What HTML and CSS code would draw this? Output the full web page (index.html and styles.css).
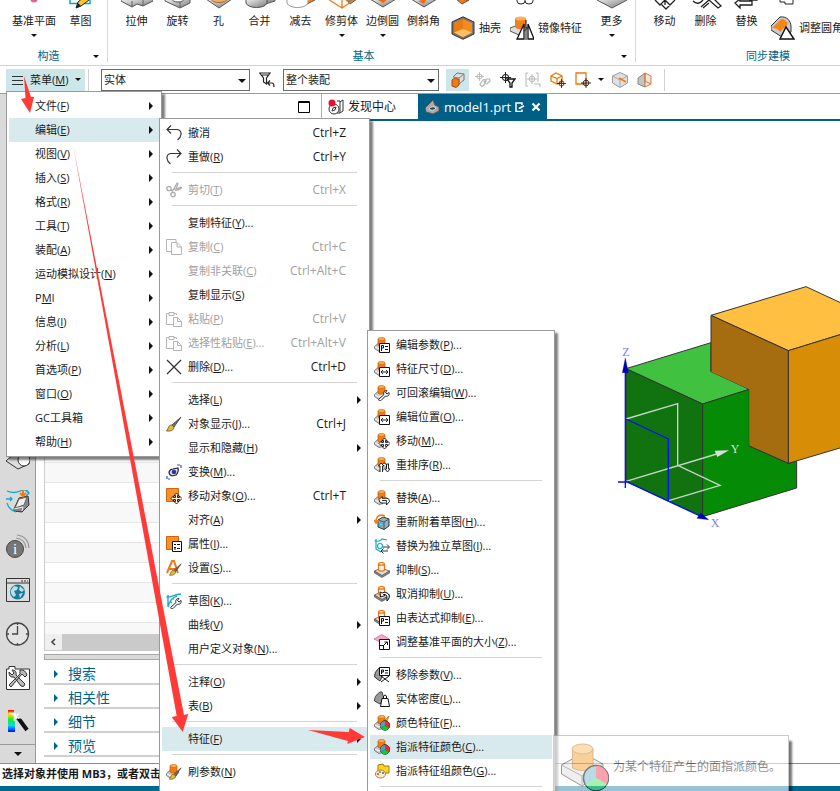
FILE: index.html
```html
<!DOCTYPE html>
<html lang="zh-CN">
<head>
<meta charset="utf-8">
<title>model1.prt</title>
<link rel="stylesheet" href="styles.css">
</head>
<body>
<svg class="defs" aria-hidden="true">
  <defs>
    <linearGradient id="metal" x1="0" y1="0" x2="1" y2="1"><stop offset="0" stop-color="#f4f4f4"/><stop offset="1" stop-color="#777"/></linearGradient>
    <linearGradient id="spectrum" x1="0" y1="0" x2="0" y2="1"><stop offset="0" stop-color="#f00"/><stop offset=".2" stop-color="#fd0"/><stop offset=".45" stop-color="#1e2"/><stop offset=".7" stop-color="#0de"/><stop offset="1" stop-color="#10f"/></linearGradient>
  </defs>
  <symbol id="feat" viewBox="0 0 16 16"><path d="M0.500 9.500L4 6.500L13 8L9 13.500L5 14.500L.5 11.500Z" fill="#c9c9c9" stroke="#666" stroke-width=".8"/><path d="M1 10L5 12L10 9" fill="none" stroke="#fff"/><path d="M4 2V8C5 9.500 10 9.500 11 8V2" fill="#f07d12" stroke="#b75a08" stroke-width=".7"/><ellipse cx="7.500" cy="2" rx="3.500" ry="1.500" fill="#ffad55" stroke="#c9680c" stroke-width=".7"/></symbol>
  <symbol id="supp" viewBox="0 0 16 16"><path d="M.5 9L7 6L15.500 9L8 14Z" fill="#ddd" stroke="#777"/><path d="M.5 9V11L8 15.500L15.500 11V9L8 13.500Z" fill="#888" stroke="#555" stroke-width=".7"/><path d="M4.500 2V8C5 9.500 10 9.500 10.500 8V2C10 0 5 0 4.500 2C5 3.500 10 3.500 10.500 2" fill="#fff3e6" stroke="#e87511" stroke-width="1.200"/></symbol>
  <symbol id="b-param" viewBox="0 0 16 16"><path d="M5.500 6.500H15.500V15.500H5.500Z" fill="#fff" stroke="#111"/><path d="M7.500 14V8.500H9.500V11H7.500M11 9.500H14M11 12.500H14" fill="none" stroke="#111"/></symbol>
  <symbol id="b-dim" viewBox="0 0 16 16"><path d="M5.500 6.500H15.500V15.500H5.500Z" fill="#fff" stroke="#111"/><path d="M7 11H14M9 9L7 11L9 13M12 9L14 11L12 13" fill="none" stroke="#111" stroke-width=".9"/></symbol>
  <symbol id="b-move" viewBox="0 0 16 16"><path d="M10.500 5L13 7.500H11.500V9.500H13.500V8L16 10.500L13.500 13V11.500H11.500V13.500H13L10.500 16L8 13.500H9.500V11.500H7.500V13L5 10.500L7.500 8V9.500H9.500V7.500H8Z" fill="#fff" stroke="#111" stroke-width=".9"/></symbol>
  <symbol id="b-wrench" viewBox="0 0 16 16"><path d="M5 14L10 9.500C9 7 11 5 13 5.500L11.500 7.500L13 9L15 7.500C16 10 13.500 12 11.500 11L7 15.500C5.500 16.500 4 15 5 14Z" fill="#fff" stroke="#111" stroke-width=".9"/></symbol>
  <symbol id="b-swap" viewBox="0 0 16 16"><path d="M5 9.500L8 6.500V8.300H13Q15.500 8.500 15.500 11.500L12.500 15V13H8Q5 13 5 9.500ZM8 10.500H12.500V12.500" fill="#fff" stroke="#111" stroke-width=".9"/></symbol>
  <symbol id="b-cycle" viewBox="0 0 16 16"><path d="M6 15V9H4.500L7 6L10 9H8.500V15M15 7H12.500V12H11L13.500 15L16 12H14.500V7M8.500 7C11 5 13 7 12.500 10" fill="#fff" stroke="#111" stroke-width=".9"/></symbol>
  <symbol id="b-pie" viewBox="0 0 16 16"><circle cx="11" cy="10.500" r="4.700" fill="#223" stroke="#222"/><path d="M11 10.500V6A4.500 4.500 0 0 1 15 13Z" fill="#f23"/><path d="M11 10.500L15 13A4.500 4.500 0 0 1 7 13Z" fill="#1c3"/><path d="M11 10.500L7 13A4.500 4.500 0 0 1 11 6Z" fill="#5a9db8"/></symbol>
  <symbol id="paste" viewBox="0 0 16 16"><path d="M7 13.500H.5V2.500H3V1.500H8V2.500H10.500V4M3 2V4.500H8V2M7.500 6.500H11.500L15.500 10.500V15.500H7.500ZM11.500 6.500V10.500H15.500" fill="none" stroke="#b4b4b4"/></symbol>
  <symbol id="brush" viewBox="0 0 16 16"><path d="M15 1L6 9L8 11Z" fill="#777" stroke="#222" stroke-width=".7"/><path d="M6 9C2 9 3 12 .5 15C5 15.500 8 14 8 11Z" fill="#e2ba45" stroke="#6b520d" stroke-width=".8"/></symbol>
  <symbol id="sketch" viewBox="0 0 16 16"><path d="M.5 4C5 5 8 1 15 1M2 2V14C3 9 6 5 11 3M6 10C3 9 5 5 8 6" fill="none" stroke="#12a7c5" stroke-width="1.300"/></symbol>
  <symbol id="target" viewBox="0 0 16 16"><circle cx="8" cy="8" r="4.500" fill="none" stroke="currentColor" stroke-width="1.500"/><path d="M8 0V16M0 8H16" stroke="currentColor" stroke-width="1.500"/></symbol>
</svg>

<div class="app">
  <header class="ribbon">
    <section class="group group-make">
      <div class="tools">
        <button class="tool wide"><svg viewBox="0 0 32 12"><circle cx="16" cy="-1" r="3.500" fill="#e4608d"/></svg>基准平面<i class="down"></i></button>
        <button class="tool"><svg viewBox="0 0 32 12"><path d="M5 0V3.500H25V0" fill="none" stroke="#0aa5c8" stroke-width="1.500"/><path d="M11 8L13 2L20 -4L24 0L16 6Z" fill="#ffc629" stroke="#222"/><path d="M11 8L13 3L16 6Z" fill="#222"/></svg>草图</button>
      </div>
      <h2>构造<i class="down corner"></i></h2>
    </section>
    <section class="group group-basic">
      <div class="tools">
        <button class="tool"><svg viewBox="0 0 32 12"><path d="M0 -1V1L11 7L16 4L22 6L32 1V-1Z" fill="url(#metal)" stroke="#555"/><path d="M11 7V1M22 6V0" stroke="#666"/></svg>拉伸</button>
        <button class="tool"><svg viewBox="0 0 32 12"><path d="M3 -1V1L18 8L28 3V-1Z" fill="url(#metal)" stroke="#555"/><path d="M18 8V2" stroke="#666"/><ellipse cx="16" cy="-1" rx="6" ry="3" fill="#fff" stroke="#555"/></svg>旋转</button>
        <button class="tool"><svg viewBox="0 0 32 12"><path d="M3 -1L16 8L29 -1Z" fill="url(#metal)" stroke="#555"/><ellipse cx="16" cy="-1" rx="8" ry="3.500" fill="#f1ad69" stroke="#a96b35"/></svg>孔</button>
        <button class="tool"><svg viewBox="0 0 32 12"><path d="M18 -1V5L31 1V-1" fill="#999" stroke="#555"/><path d="M2 -1V3C4 9 21 9 23 3V-1" fill="url(#metal)" stroke="#555"/></svg>合并</button>
        <button class="tool"><svg viewBox="0 0 32 12"><path d="M20 -1V5L30 0" fill="#f5831f" stroke="#555"/><path d="M2 -1V3C4 9 21 9 23 3V-1" fill="#fff" stroke="#999"/></svg>减去</button>
        <button class="tool"><svg viewBox="0 0 32 12"><path d="M20 -1H31L24 4Z" fill="#888" stroke="#555"/><path d="M2 -1L16 8L28 0M16 -1V8M4 0L11 -3M20 1L25 -3" fill="none" stroke="#ee7b18" stroke-width="1.300"/></svg>修剪体<i class="down"></i></button>
        <button class="tool"><svg viewBox="0 0 32 12"><path d="M3 -1L16 7L29 -1Z" fill="url(#metal)" stroke="#555"/><path d="M11 0L16 3L21 -1Z" fill="#f36c10"/></svg>边倒圆<i class="down"></i></button>
        <button class="tool"><svg viewBox="0 0 32 12"><path d="M3 -1L16 7L29 -1Z" fill="url(#metal)" stroke="#555"/><path d="M10 1L16 4L19 -1Z" fill="#f36c10"/></svg>倒斜角</button>
        <div class="stack">
          <span class="upper"><svg viewBox="0 0 24 5"><path d="M5 -1L11 4L18 0Z" fill="#f27b16" stroke="#555"/></svg></span>
          <button class="line"><svg viewBox="0 0 24 24"><path d="M12 .8L23 6V18L12 23.300L1 18V6Z" fill="#777" stroke="#333"/><path d="M12 3L21 7V16.500L12 21L3 16.500V7Z" fill="#f58b1d"/><path d="M12 3V13L3 17V7Z" fill="#e97c10"/><path d="M12 13L21 16.500L12 21L3 16.500Z" fill="#ffc061"/></svg>抽壳</button>
        </div>
        <div class="stack">
          <span class="upper"><svg viewBox="0 0 24 5"><path d="M7 -2V1Q7 4 11 4Q15 4 15 1V-2M15 1Q15 4 19 4Q23 4 23 1V-2" fill="none" stroke="#222"/></svg></span>
          <button class="line"><svg viewBox="0 0 24 24"><path d="M0 12L8 9L18 12L9 19L0 15Z" fill="#ddd" stroke="#555"/><path d="M5 2V11C7 14 14 14 16 11V2Z" fill="#f27f17"/><ellipse cx="10.500" cy="2.500" rx="5.500" ry="2" fill="#ffae5b"/><path d="M14 8V23H7ZM18 8V23H24Z" fill="#fff" stroke="#111" stroke-width="1.300"/><path d="M16 4V24" stroke="#111"/></svg>镜像特征</button>
        </div>
        <button class="tool more"><svg viewBox="0 0 32 12"><path d="M1 0L16 8L31 0V-2H1Z" fill="url(#metal)" stroke="#555"/></svg>更多<i class="down"></i></button>
      </div>
      <h2>基本<i class="down corner"></i></h2>
    </section>
    <section class="group group-sync">
      <div class="tools">
        <button class="tool"><svg viewBox="0 0 32 12"><path d="M6 0L11 5L16 0L21 5L26 0M12 4L17 9L22 4M16 0V5" fill="#fff" stroke="#222" stroke-width="1.300"/></svg>移动</button>
        <button class="tool"><svg viewBox="0 0 32 12"><path d="M3 1Q8 6 13 0M11 7L19 0L28 8L31 6L24 -1M13 8L19 3" fill="none" stroke="#222" stroke-width="1.300"/></svg>删除</button>
        <button class="tool"><svg viewBox="0 0 32 12"><path d="M4 3L9 -1V1H21V5H9V8ZM18 0H26V-3" fill="#fff" stroke="#222" stroke-width="1.300"/></svg>替换</button>
        <div class="stack">
          <span class="upper"><svg viewBox="0 0 24 5"><path d="M9 -2V2H14V4H22V-2" fill="none" stroke="#222"/></svg></span>
          <button class="line"><svg viewBox="0 0 24 24"><path d="M0 10L9 1C16 0 20 5 20 11V16L11 21L0 14Z" fill="#ccc" stroke="#333"/><path d="M1 12L10 3Q15 3 17 8L9 16Q7 12 1 12Z" fill="#f58719"/><path d="M15 11L23 23H9Z" fill="#fff" stroke="#111" stroke-width="1.400"/></svg>调整圆角</button>
        </div>
      </div>
      <h2>同步建模</h2>
    </section>
  </header>

  <div class="toolbar" role="toolbar">
    <button class="menu-button"><svg viewBox="0 0 12 12"><path d="M0 2.500H11M0 6.500H11M0 10.500H11" stroke="#333"/></svg>菜单(<u>M</u>)<i class="down"></i></button>
    <label class="combo combo-a"><select aria-label="类型过滤器"><option>实体</option></select></label>
    <button class="icon" aria-label="重置过滤器"><svg viewBox="0 0 16 16"><path d="M.7 1H11L7.500 6V12L4.500 10V6ZM3 3H9" fill="none" stroke="#222" stroke-width="1.200"/><path d="M9 11H13Q15 11 15 15M11 8.500L8.500 11L11 13.500" fill="none" stroke="#222" stroke-width="1.200"/></svg></button>
    <label class="combo combo-b"><select aria-label="选择范围"><option>整个装配</option></select></label>
    <div class="icons">
      <button class="icon on" aria-label="选择实体"><svg viewBox="0 0 16 16"><path d="M3 5L7 1L14 2V8L9 12" fill="#ddd" stroke="#777"/><path d="M3 5L9 6L14 2M9 6V10" fill="none" stroke="#888"/><path d="M2 8L5 6L9 7.500V13L6 15.500L2 14Z" fill="#f27a12" stroke="#a94d08"/></svg></button>
      <button class="icon dim" aria-label="链接"><svg viewBox="0 0 16 16"><use href="#target" width="9" height="9"/><path d="M5 12L8 8Q10 7 11 9L9 13Q6 16 5 12ZM9 10L12 7Q15 6 15 9L12 12Q10 12 9 10Z" fill="none" stroke="currentColor" stroke-width="1.200"/></svg></button>
      <button class="icon" aria-label="捕捉过滤"><svg viewBox="0 0 16 16"><use href="#target" width="11" height="11"/><path d="M7 7H15L12 11V15H10V11Z" fill="#fff" stroke="#111" stroke-width="1.300"/></svg></button>
      <button class="icon dim" aria-label="区域"><svg viewBox="0 0 16 16"><path d="M3 1H1V14H3M11 1H13V10M9 12H15V15" fill="none" stroke="currentColor"/><use href="#target" x="2" y="2" width="10" height="10"/></svg></button>
      <button class="icon" aria-label="立方体选择"><svg viewBox="0 0 16 16"><path d="M1 4L6 1L12 4V10L7 12L1 9ZM1 4L7 6.500L12 4M7 6.500V12" fill="none" stroke="#e97a12" stroke-width="1.300"/><use href="#target" x="7" y="7" width="9" height="9"/></svg></button>
      <button class="icon" aria-label="矩形选择"><svg viewBox="0 0 16 16"><path d="M1 1H11V12H1Z" fill="none" stroke="#e97a12" stroke-width="1.300"/><use href="#target" x="6" y="6" width="10" height="10"/></svg></button>
      <i class="down"></i>
      <button class="icon" aria-label="截面"><svg viewBox="0 0 16 16"><path d="M.5 4L8 .5L15.500 4V11L8 15.500L.5 11Z" fill="#e0e0e0" stroke="#999"/><path d="M.5 4L8 8L15.500 4M8 8V15" fill="none" stroke="#aaa"/><path d="M7 6L14 10" stroke="#f27a12" stroke-width="1.800"/></svg></button>
      <button class="icon" aria-label="着色"><svg viewBox="0 0 16 16"><path d="M1 6L8 1V15L1 12Z" fill="#c4c4c4" stroke="#888"/><path d="M8 1L14 4V12L8 15Z" fill="#e6e6e6" stroke="#e8762d"/><path d="M8 1V9L14 12" fill="none" stroke="#e8762d"/></svg></button>
    </div>
  </div>

  <main class="work">
    <nav class="rail">
      <button aria-label="装配"><svg viewBox="0 0 24 24"><path d="M0 15L8 8H23V18L12 23Z" fill="#ddd" stroke="#333"/><circle cx="18" cy="14" r="6" fill="#fff" stroke="#333"/></svg></button>
      <button aria-label="流分析"><svg viewBox="0 0 24 24"><path d="M8 19L13 8L22 6L23 15L16 22L8 21Z" fill="#888" stroke="#333"/><path d="M13 9L21 7L18 15L9 18Z" fill="#eee" stroke="#666"/><path d="M8 19L17 17L16 21" fill="none" stroke="#eee"/><path d="M1 1Q8 4 14 1T23 3M0 9H6M1 13Q3 20 10 22M20 1L23 3L20 6M4 7L6 9L4 11" fill="none" stroke="#18a6cf" stroke-width="1.300"/><path d="M17 0V5M14 3L17 6L20 3" fill="none" stroke="#f27a12" stroke-width="2"/></svg></button>
      <button aria-label="信息"><svg viewBox="0 0 24 24"><circle cx="9" cy="15" r="8.500" fill="#777" stroke="#444"/><text x="9" y="20" text-anchor="middle" class="info">i</text><path d="M10 4Q19 5 20 14M11 1Q22 2 23 14" fill="none" stroke="#999" stroke-width="1.200"/></svg></button>
      <button aria-label="浏览器"><svg viewBox="0 0 24 24"><path d="M.5 .5H23.500V23.500H.5Z" fill="#ddd" stroke="#333"/><path d="M.5 5H23.500M15 3H17M18 3H20M21 3H22" stroke="#333"/><circle cx="11.500" cy="14" r="7.500" fill="#187a9b"/><path d="M5 12L8 8L12 9L11 12L8 13L10 17L8 19Q4 16 5 12M14 8L18 12L16 14L13 12ZM13 16L17 15L14 20Z" fill="#bcdfe8"/></svg></button>
      <button aria-label="历史记录"><svg viewBox="0 0 24 24"><circle cx="11.500" cy="12" r="11" fill="#e4e4e4" stroke="#444" stroke-width="1.300"/><path d="M11.500 4V12H6M11.500 1V3M11.500 21V23M1 12H3M20 12H22" fill="none" stroke="#444" stroke-width="1.300"/></svg></button>
      <button aria-label="工具"><svg viewBox="0 0 24 24"><path d="M.5 3H3V.5H9V3H23.500V23.500H.5Z" fill="#fff" stroke="#333"/><path d="M3 6L6 9L8 7L6 4Q11 4 10 9L19 18Q18 22 15 20L8 11Q3 12 3 6ZM14 4Q19 3 21 9L19 11L16 8L5 21L3 19L14 8Z" fill="#bbb" stroke="#333"/></svg></button>
      <button aria-label="颜色"><svg viewBox="0 0 24 24"><path d="M2 0H9V22H2Z" fill="url(#spectrum)"/><path d="M10 5L21 20" stroke="#111" stroke-width="4"/><path d="M10 4L13 9M9 0L10 4L15 2L12 6L16 8L11 8L8 11L8 6L3 3L8 3Z" fill="#fff" stroke="#ddd"/></svg></button>
      <button class="rail-more" aria-label="更多"><i class="down big"></i></button>
    </nav>
    <section class="panel">
      <div class="panel-head"><svg viewBox="0 0 12 12"><path d="M.5 .5H11.500V11.500H.5ZM0 1.500H12" fill="none" stroke="#000"/></svg></div>
      <div class="panel-body">
        <div class="rows"></div>
        <div class="scroll"><svg viewBox="0 0 6 8"><path d="M5 1L2 4L5 7" fill="none" stroke="#444" stroke-width="1.600"/></svg></div>
        <div class="splitter"></div>
        <button class="section"><i class="right"></i>搜索</button>
        <button class="section"><i class="right"></i>相关性</button>
        <button class="section"><i class="right"></i>细节</button>
        <button class="section"><i class="right"></i>预览</button>
      </div>
    </section>
    <section class="view">
      <div class="tabs">
        <button class="tab"><svg viewBox="0 0 16 16"><circle cx="6" cy="10" r="5" fill="#fff" stroke="#333"/><path d="M4 12L5 9L8 8L7 11ZM9 2H12V14H9M12 3L15 1V12L12 14" fill="none" stroke="#333"/><circle cx="4" cy="4" r="3.500" fill="#e8112d"/></svg>发现中心</button>
        <button class="tab current"><svg viewBox="0 0 16 16"><path d="M1 9L9 1L11 6L15 8V12L9 15L2 13Z" fill="#aaa" stroke="#555"/><path d="M5 10Q8 6 12 9Q9 13 5 10Z" fill="#345" stroke="#ddd"/></svg><span>model1.prt</span><svg class="small" viewBox="0 0 10 10"><path d="M7 3V1H1V9.500H7V7.500" fill="none" stroke="#fff" stroke-width="1.500"/><path d="M3.500 7L4 5.500L8.500 3L9.500 4.500L5 7Z" fill="#fff"/></svg><svg class="small" viewBox="0 0 10 10"><path d="M1.500 1.500L8.500 8.500M8.500 1.500L1.500 8.500" stroke="#fff" stroke-width="2.200"/></svg></button>
      </div>
      <div class="scene">
        <svg viewBox="0 0 720 780">
          <g stroke="#333" stroke-width="3" stroke-linejoin="round">
            <path d="M78 266L333 188V275L448 328L308 372Z" fill="#40c140"/>
            <path d="M78 266L308 372V710L78 604Z" fill="#107310"/>
            <path d="M308 372L448 328V498L566 550L590 544V624L308 710Z" fill="#058b05"/>
            <path d="M333 106L618 20L730 72V161L565 212Z" fill="#ffbf40"/>
            <path d="M565 212L730 161V501L565 550Z" fill="#d78d05"/>
          </g>
          <path d="M333 106L565 212V550L448 498V328L333 275Z" fill="#a56d0f"/>
          <path d="M333 275V106L565 212V550L448 498" fill="none" stroke="#333" stroke-width="3"/>
          <path d="M78 417L233 371V556L360 616L206 662M78 604L350 522" fill="none" stroke="#c8d4c8" stroke-width="4"/>
          <path d="M344 512L387 511L352 531Z" fill="#ddd"/>
          <path d="M76 270V624M54 606H88M78 417L205 477V662M78 604L300 708" fill="none" stroke="#0012ee" stroke-width="4"/>
          <path d="M67 278L76 234L85 278ZM302 699L326 719L291 715Z" fill="#0000b8" stroke="#0000b8"/>
          <g class="axis"><text x="67" y="228">Z</text><text class="y" x="392" y="518">Y</text><text x="332" y="740">X</text></g>
        </svg>
      </div>
    </section>
  </main>

  <footer class="status">选择对象并使用 MB3，或者双击</footer>
</div>

<ul class="menu menu-main" role="menu">
  <li><button>文件(<u>F</u>)<i class="right"></i></button></li>
  <li><button class="hot">编辑(<u>E</u>)<i class="right"></i></button></li>
  <li><button>视图(<u>V</u>)<i class="right"></i></button></li>
  <li><button>插入(<u>S</u>)<i class="right"></i></button></li>
  <li><button>格式(<u>R</u>)<i class="right"></i></button></li>
  <li><button>工具(<u>T</u>)<i class="right"></i></button></li>
  <li><button>装配(<u>A</u>)<i class="right"></i></button></li>
  <li><button>运动模拟设计(<u>N</u>)<i class="right"></i></button></li>
  <li><button>P<u>M</u>I<i class="right"></i></button></li>
  <li><button>信息(<u>I</u>)<i class="right"></i></button></li>
  <li><button>分析(<u>L</u>)<i class="right"></i></button></li>
  <li><button>首选项(<u>P</u>)<i class="right"></i></button></li>
  <li><button>窗口(<u>O</u>)<i class="right"></i></button></li>
  <li><button>GC工具箱<i class="right"></i></button></li>
  <li><button>帮助(<u>H</u>)<i class="right"></i></button></li>
</ul>

<ul class="menu menu-edit" role="menu">
  <li><button><svg viewBox="0 0 16 16"><path d="M1 4.500H11Q15.500 5 15 9.500Q14.500 13 11.500 15M5 .5L1 4.500L5 8.500" fill="none" stroke="#333" stroke-width="1.200"/></svg><span>撤消</span><kbd>Ctrl+Z</kbd></button></li>
  <li><button><svg viewBox="0 0 16 16"><path d="M15 4.500H5Q.5 5 1 9.500Q1.500 13 4.500 15M11 .5L15 4.500L11 8.500" fill="none" stroke="#333" stroke-width="1.200"/></svg><span>重做(<u>R</u>)</span><kbd>Ctrl+Y</kbd></button></li>
  <li class="sep"></li>
  <li><button disabled><svg viewBox="0 0 16 16"><path d="M15.500 5L5 8.500M11 1L6 10.500M15.500 5Q16 7 9 8.500M11 1Q13 1 10 6" fill="none" stroke="#aaa" stroke-width="1.200"/><circle cx="3" cy="6.500" r="2.200" fill="none" stroke="#aaa" stroke-width="1.300"/><circle cx="7" cy="12.500" r="2.200" fill="none" stroke="#aaa" stroke-width="1.300"/></svg><span>剪切(<u>T</u>)</span><kbd>Ctrl+X</kbd></button></li>
  <li class="sep"></li>
  <li><button><span class="blank"></span><span>复制特征(<u>Y</u>)...</span></button></li>
  <li><button disabled><svg viewBox="0 0 16 16"><path d="M5.500 12.500H.5V.5H10V3M5.500 3.500H11L15.500 8V15.500H5.500ZM11 3.500V8H15.500" fill="none" stroke="#b4b4b4"/></svg><span>复制(<u>C</u>)</span><kbd>Ctrl+C</kbd></button></li>
  <li><button disabled><span class="blank"></span><span>复制非关联(<u>C</u>)</span><kbd>Ctrl+Alt+C</kbd></button></li>
  <li><button><span class="blank"></span><span>复制显示(<u>S</u>)</span></button></li>
  <li><button disabled><svg><use href="#paste"/></svg><span>粘贴(<u>P</u>)</span><kbd>Ctrl+V</kbd></button></li>
  <li><button disabled><svg><use href="#paste"/></svg><span>选择性粘贴(<u>E</u>)...</span><kbd>Ctrl+Alt+V</kbd></button></li>
  <li><button><svg viewBox="0 0 16 16"><path d="M1 1L15 15M15 1L1 15" stroke="#333" stroke-width="1.300"/></svg><span>删除(<u>D</u>)...</span><kbd>Ctrl+D</kbd></button></li>
  <li class="sep"></li>
  <li><button><span class="blank"></span><span>选择(<u>L</u>)</span><i class="right"></i></button></li>
  <li><button><svg><use href="#brush"/></svg><span>对象显示(<u>J</u>)...</span><kbd>Ctrl+J</kbd></button></li>
  <li><button><span class="blank"></span><span>显示和隐藏(<u>H</u>)</span><i class="right"></i></button></li>
  <li><button><svg viewBox="0 0 16 16"><path d="M3 8Q4 5 7 5L12 4Q13 8 10 11L6 12Q3 11 3 8Z" fill="#dde" stroke="#223" stroke-width="1.200"/><circle cx="8" cy="8" r="2.300" fill="#33a"/><path d="M11 1H15V5M1 12V15H4" fill="none" stroke="#2b55c9" stroke-width="1.200" stroke-dasharray="3 1"/></svg><span>变换(<u>M</u>)...</span></button></li>
  <li><button><svg viewBox="0 0 16 16"><path d="M.5 .5H12.500V13.500H.5Z" fill="#f79226" stroke="#cc6410"/><use href="#b-move"/></svg><span>移动对象(<u>O</u>)...</span><kbd>Ctrl+T</kbd></button></li>
  <li><button><span class="blank"></span><span>对齐(<u>A</u>)</span><i class="right"></i></button></li>
  <li><button><svg viewBox="0 0 16 16"><path d="M.5 .5H12.500V13.500H.5Z" fill="#f79226" stroke="#cc6410"/><path d="M6.500 5.500H15.500V15.500H6.500Z" fill="#fff" stroke="#111"/><path d="M8 8.500H10M8 11.500H10M11 8.500H14M11 12.500H14M8 13H10" stroke="#111" stroke-width="1.200"/></svg><span>属性(<u>I</u>)...</span></button></li>
  <li><button><svg viewBox="0 0 16 16"><path d="M1 13L6 1H8L12 13M3 9H11" fill="none" stroke="#ee7a18" stroke-width="2"/><use href="#brush" x="3" y="3" width="13" height="13"/></svg><span>设置(<u>S</u>)...</span></button></li>
  <li class="sep"></li>
  <li><button><svg viewBox="0 0 16 16"><use href="#sketch"/><use href="#b-wrench"/></svg><span>草图(<u>K</u>)...</span></button></li>
  <li><button><span class="blank"></span><span>曲线(<u>V</u>)</span><i class="right"></i></button></li>
  <li><button><span class="blank"></span><span>用户定义对象(<u>N</u>)...</span></button></li>
  <li class="sep"></li>
  <li><button><span class="blank"></span><span>注释(<u>O</u>)</span><i class="right"></i></button></li>
  <li><button><span class="blank"></span><span>表(<u>B</u>)</span><i class="right"></i></button></li>
  <li class="sep"></li>
  <li><button class="hot"><span class="blank"></span><span>特征(<u>F</u>)</span><i class="right"></i></button></li>
  <li class="sep"></li>
  <li><button><svg viewBox="0 0 16 16"><use href="#feat"/><use href="#brush" x="3" y="3" width="13" height="13"/></svg><span>刷参数(<u>N</u>)</span></button></li>
</ul>

<ul class="menu menu-feature" role="menu">
  <li><button><svg><use href="#feat"/><use href="#b-param"/></svg><span>编辑参数(<u>P</u>)...</span></button></li>
  <li><button><svg><use href="#feat"/><use href="#b-dim"/></svg><span>特征尺寸(<u>D</u>)...</span></button></li>
  <li><button><svg><use href="#feat"/><use href="#b-wrench"/></svg><span>可回滚编辑(<u>W</u>)...</span></button></li>
  <li><button><svg><use href="#feat"/><use href="#b-dim"/></svg><span>编辑位置(<u>O</u>)...</span></button></li>
  <li><button><svg><use href="#feat"/><use href="#b-move"/></svg><span>移动(<u>M</u>)...</span></button></li>
  <li><button><svg><use href="#feat"/><use href="#b-cycle"/></svg><span>重排序(<u>R</u>)...</span></button></li>
  <li class="sep"></li>
  <li><button><svg><use href="#feat"/><use href="#b-swap"/></svg><span>替换(<u>A</u>)...</span></button></li>
  <li><button><svg viewBox="0 0 16 16"><path d="M4 6L9 3L15 5V12L10 15.500L4 13Z" fill="#8eb3bf" stroke="#333"/><path d="M4 6L10 8L15 5M10 8V15" fill="none" stroke="#456"/><path d="M6 9H8V12H6Z" fill="#fff" stroke="#13a4c8"/><path d="M0 6L2 9L5 6M2 8Q2 1 8 1L11 2" fill="none" stroke="#ee7b18" stroke-width="1.500"/></svg><span>重新附着草图(<u>H</u>)...</span></button></li>
  <li><button><svg viewBox="0 0 16 16"><path d="M.5 3Q6 4 8 1L13 2M2 1V11L7 14" fill="none" stroke="#12a7c5" stroke-width="1.200"/><circle cx="6" cy="8" r="2.500" fill="none" stroke="#12a7c5" stroke-width="1.200"/><path d="M9 9H15M13 6.500L15.500 9L13 11.500M14 13H7M9.500 10.500L7 13L9.500 15.500" fill="none" stroke="#222" stroke-width=".9"/></svg><span>替换为独立草图(<u>I</u>)...</span></button></li>
  <li><button><svg><use href="#supp"/></svg><span>抑制(<u>S</u>)...</span></button></li>
  <li><button><svg viewBox="0 0 16 16"><use href="#supp"/><path d="M6 6L6.500 11L11 9.500L9.500 8.500Q13 8 13 12V15Q17 11 14 7.500Q11 5 8 7Z" fill="#fff" stroke="#111"/></svg><span>取消抑制(<u>U</u>)...</span></button></li>
  <li><button><svg><use href="#supp"/><use href="#b-param"/></svg><span>由表达式抑制(<u>E</u>)...</span></button></li>
  <li><button><svg viewBox="0 0 16 16"><path d="M0 5L8 .5L15 5L8 9Z" fill="#f4a9c7" stroke="#d883a8"/><path d="M5.500 5.500H15.500V15.500H5.500Z" fill="#fff" stroke="#111"/><path d="M5.500 11.500H9.500V15.500M9 12L13 8M10.500 8H13.500V11" fill="none" stroke="#111"/></svg><span>调整基准平面的大小(<u>Z</u>)...</span></button></li>
  <li class="sep"></li>
  <li><button><svg viewBox="0 0 16 16"><path d="M5 1Q0 5 .5 10L6 14L8 10V2Z" fill="#999" stroke="#333"/><path d="M5.500 .5H15.500V8.500H5.500Z" fill="#fff" stroke="#111"/><path d="M7.500 7V3H9.500V5H7.500M11 3.500H14M11 6H14M7 9L15 15M15 9L7 15" fill="none" stroke="#111"/></svg><span>移除参数(<u>V</u>)...</span></button></li>
  <li><button><svg viewBox="0 0 16 16"><path d="M6 1Q0 5 .5 10L6 13L10 8L8 1Z" fill="#999" stroke="#444"/><path d="M8 7.500H14L15.500 15.500H6.500ZM9.500 7V5Q11 3 12.500 5V7" fill="#fff" stroke="#111"/></svg><span>实体密度(<u>L</u>)...</span></button></li>
  <li><button><svg viewBox="0 0 16 16"><use href="#feat"/><path d="M9 7L15 1L13 6Z" fill="#f6b635" stroke="#a56c00" stroke-width=".7"/><use href="#b-pie"/></svg><span>颜色特征(<u>F</u>)...</span></button></li>
  <li><button class="hot"><svg><use href="#feat"/><use href="#b-pie"/></svg><span>指派特征颜色(<u>C</u>)...</span></button></li>
  <li><button><svg viewBox="0 0 16 16"><path d="M4 2L9 1L10 3H15V10H4Z" fill="#ffd51f" stroke="#a97800"/><ellipse cx="6.500" cy="11" rx="5" ry="4" fill="#fff0d6" stroke="#c4721c"/><circle cx="4" cy="11" r="1" fill="#e32"/><circle cx="6" cy="9" r="1" fill="#2a4"/><circle cx="9" cy="10" r="1" fill="#26c"/></svg><span>指派特征组颜色(<u>G</u>)...</span></button></li>
  <li class="sep"></li>
</ul>

<div class="tip" role="tooltip">
  <svg viewBox="0 0 48 48"><path d="M.5 22L22 10L42 21V30L21 43L.5 31Z" fill="#e6e6e6" stroke="#555"/><path d="M.5 22L21 33L42 21M21 33V43" fill="none" stroke="#888"/><path d="M11.500 6V25Q22 30 32 25V6" fill="#f8b257" stroke="#c98c45"/><ellipse cx="21.500" cy="6" rx="10.500" ry="5" fill="#fcc983" stroke="#c98c45"/><circle cx="35" cy="35" r="12.500" fill="#8cc4d6" stroke="#222" stroke-width="1.500"/><path d="M35 35V23A12 12 0 0 1 45.500 41Z" fill="#ff6478"/><path d="M35 35L45.500 41A12 12 0 0 1 24.500 41Z" fill="#63ee83"/></svg>
  <span>为某个特征产生的面指派颜色。</span>
</div>

<svg class="marks" viewBox="0 0 400 760" aria-hidden="true"><g fill="#ff3a37"><path d="M24 76L25.500 98L21 99L30 113L34 97L31 97Z"/><path d="M73 145L176.700 716L171.700 717L182.700 732L188.300 714L184 715Z"/><path d="M308 730L348 741L347.300 744L365 737L349.700 728L348.700 732Z"/></g></svg>
</body>
</html>
```
FILE: styles.css
```css
* { box-sizing: border-box; }
body {
  margin: 0;
  height: 100vh;
  overflow: hidden;
  position: relative;
  background: #fff;
  color: #1a1a1a;
  font: 11px/16px "Open Sans", "Noto Sans CJK SC", sans-serif;
}
button {
  border: 0;
  padding: 0;
  margin: 0;
  background: none;
  font: inherit;
  color: inherit;
  white-space: nowrap;
}
h2, ul { margin: 0; padding: 0; }
ul { list-style: none; }
u { text-underline-offset: 1px; }
svg { flex: none; display: block; }
.defs { position: absolute; width: 0; height: 0; }

.down {
  width: 0;
  height: 0;
  border: 3px solid transparent;
  border-top-color: #111;
  border-bottom: 0;
}
.down.big { border-width: 4px 4px 0; }
.right {
  width: 0;
  height: 0;
  border: 4px solid transparent;
  border-left-color: #111;
  border-right: 0;
}

.app { height: 100%; display: flex; flex-direction: column; }

.ribbon {
  height: 66px;
  flex: none;
  display: flex;
  border-bottom: 1px solid #d2d2d2;
  overflow: hidden;
}
.group {
  flex: none;
  display: flex;
  flex-direction: column;
  justify-content: space-between;
  height: 62px;
}
.group-make { width: 108px; padding-left: 8px; }
.group-basic { width: 528px; padding-left: 8px; }
.group-make, .group-basic { border-right: 1px solid #d8d8d8; }
.group-sync { flex: 1 0 250px; padding-left: 8px; }
.tools { display: flex; }
.tool {
  width: 41px;
  display: flex;
  flex-direction: column;
  align-items: center;
}
.tool.wide { width: 52px; }
.tool svg { width: 32px; height: 12px; margin-bottom: 1px; }
.tool .down { margin-top: 5px; }
.tool.more { margin-left: 9px; }
.stack { margin-left: 7px; }
.stack + .stack { margin-left: 9px; }
.upper svg { width: 24px; height: 5px; }
.line { display: flex; align-items: center; gap: 4px; margin-top: 11px; }
.line svg { width: 24px; height: 24px; }
.group-sync .stack { margin-left: 4px; }
.group h2 {
  display: flex;
  justify-content: center;
  align-items: center;
  position: relative;
  font-size: 11px;
  font-weight: normal;
  line-height: 12px;
  color: #00648c;
}
.group-make h2 { padding-right: 18px; }
.group-basic h2 { padding-right: 24px; }
.group-sync h2 { justify-content: flex-start; padding-left: 102px; }
.corner { position: absolute; right: 8px; }

.toolbar {
  height: 28px;
  flex: none;
  display: flex;
  align-items: center;
  padding-left: 6px;
  border-bottom: 1px solid #9a9a9a;
}
.menu-button {
  height: 22px;
  width: 79px;
  padding: 0 4px 0 6px;
  display: flex;
  align-items: center;
  background: #cde6ea;
}
.menu-button svg { width: 12px; height: 12px; margin-right: 6px; }
.menu-button .down { margin-left: auto; }
.combo { position: relative; display: flex; }
.combo-a { width: 149px; margin-left: 16px; margin-right: 9px; }
.combo-a::before {
  content: "";
  position: absolute;
  left: -13px;
  height: 22px;
  border-left: 1px solid #d0d0d0;
}
.combo-b { width: 156px; margin-left: 8px; }
.combo select {
  appearance: none;
  width: 100%;
  height: 22px;
  padding: 0 2px;
  border: 1px solid #6b6b6b;
  border-radius: 0;
  background: #fff;
  color: inherit;
  font: inherit;
}
.combo::after {
  content: "";
  position: absolute;
  right: 4px;
  top: 10px;
  border: 4px solid transparent;
  border-top-color: #111;
  border-bottom: 0;
}
.icon svg { width: 16px; height: 16px; }
.icons {
  display: flex;
  align-items: center;
  gap: 2px;
  margin-left: 7px;
  padding-right: 8px;
  border-right: 1px solid #d0d0d0;
}
.icons .icon {
  width: 23px;
  height: 22px;
  display: grid;
  place-items: center;
  color: #222;
}
.icons .icon.on { background: #cde6ea; }
.icons .icon.dim { color: #b4b4b4; }
.icons > .down { margin: 0 2px; }

.work { flex: 1; min-height: 0; display: flex; }
.rail {
  width: 36px;
  flex: none;
  display: flex;
  flex-direction: column;
  justify-content: flex-end;
  background: #dadada;
  border-right: 1px solid #9a9a9a;
}
.rail button { height: 44px; flex: none; display: grid; place-items: center; }
.rail svg { width: 24px; height: 24px; }
.rail .rail-more { height: 19px; border-top: 1px solid #9a9a9a; }
.info { font: 15px "Liberation Serif", serif; fill: #fff; }

.panel {
  width: 286px;
  flex: none;
  display: flex;
  flex-direction: column;
  padding-left: 8px;
  border-right: 1px solid #b0b0b0;
}
.panel-head {
  height: 26px;
  display: flex;
  justify-content: flex-end;
  align-items: center;
  padding-right: 11px;
}
.panel-head svg { width: 12px; height: 12px; }
.panel-body { flex: 1; min-height: 0; display: flex; flex-direction: column; padding-bottom: 6px; }
.rows {
  flex: 1;
  border-left: 1px solid #ccc;
  background: repeating-linear-gradient(#fff 0 19px, #e6e6e6 19px 20px, #f8f8f8 20px 39px, #e6e6e6 39px 40px);
  background-position-y: 3px;
}
.scroll {
  height: 17px;
  display: flex;
  align-items: center;
  padding-left: 5px;
  border: solid #ccc;
  border-width: 0 0 1px 1px;
  background: linear-gradient(90deg, #efefef 17px, #cacaca 17px);
}
.scroll svg { width: 6px; height: 8px; }
.splitter { height: 6px; margin: 3px 0 1px; background: #dadada; border: 1px solid #a8a8a8; }
.section {
  height: 24px;
  display: flex;
  align-items: center;
  gap: 10px;
  padding: 3px 0 0 10px;
  border-bottom: 2px solid #d0d0d0;
  color: #00648c;
  font-size: 14px;
  line-height: 20px;
}
.section .right { border-left-color: #00648c; }

.view { flex: 1; min-width: 0; display: flex; flex-direction: column; }
.tabs { height: 27px; display: flex; border-bottom: 2px solid #005f87; }
.tab {
  display: flex;
  align-items: center;
  gap: 4px;
  padding: 0 22px 0 6px;
  font-size: 12px;
}
.tab svg { width: 16px; height: 16px; }
.tab .small { width: 10px; height: 10px; }
.tab .small + .small { margin-left: 2px; }
.tab.current { background: #005f87; color: #fff; padding: 0 6px; font-size: 13px; }
.scene { flex: 1; position: relative; overflow: hidden; }
.scene svg { position: absolute; left: 278px; top: 159px; width: 240px; height: 260px; }
.axis { font: 36px "Liberation Serif", serif; fill: #7d7df2; }
.axis .y { fill: #d5e5d5; }

.status {
  height: 28px;
  flex: none;
  padding: 1px 2px;
  border-top: 1px solid #8a8a8a;
  border-bottom: 5px solid #00698f;
  font-weight: bold;
  line-height: 18px;
  white-space: nowrap;
}

.menu {
  position: absolute;
  padding: 2px;
  background: #fff;
  border: 1px solid #9a9a9a;
  box-shadow: 3px 3px 2px rgba(0, 0, 0, .5);
}
.menu-main { left: 6px; top: 91px; width: 156px; }
.menu-edit { left: 159px; top: 118px; bottom: -8px; width: 211px; }
.menu-feature { left: 367px; top: 330px; bottom: -8px; width: 188px; }
.menu button {
  width: 100%;
  height: 24px;
  display: flex;
  align-items: center;
  gap: 6px;
  padding: 0 6px 0 4px;
}
.menu-main button { padding-left: 26px; gap: 0; }
.menu button.hot { background: #d9eaee; }
.menu button:disabled { color: #a0a0a0; }
.menu svg { width: 16px; height: 16px; }
.menu .blank { width: 16px; }
.menu .right { margin-left: auto; }
.menu kbd { margin-left: auto; padding-right: 15px; font: inherit; font-size: 12px; }
.sep { height: 9px; padding: 3px 10px 0; }
.sep::before { content: ""; display: block; border-top: 1px solid #d4d4d4; }

.tip {
  position: absolute;
  left: 553px;
  top: 735px;
  width: 236px;
  height: 80px;
  display: flex;
  align-items: flex-start;
  gap: 4px;
  padding: 7px;
  background: #fff;
  border: 1px solid #aaa;
  box-shadow: 3px 6px 2px rgba(0, 0, 0, .9);
  opacity: .6;
  font-size: 12px;
}
.tip svg { width: 48px; height: 48px; }
.tip span { padding-top: 16px; white-space: nowrap; color: #444; }
.marks { position: absolute; left: 0; top: 0; width: 400px; height: 760px; pointer-events: none; }
```
